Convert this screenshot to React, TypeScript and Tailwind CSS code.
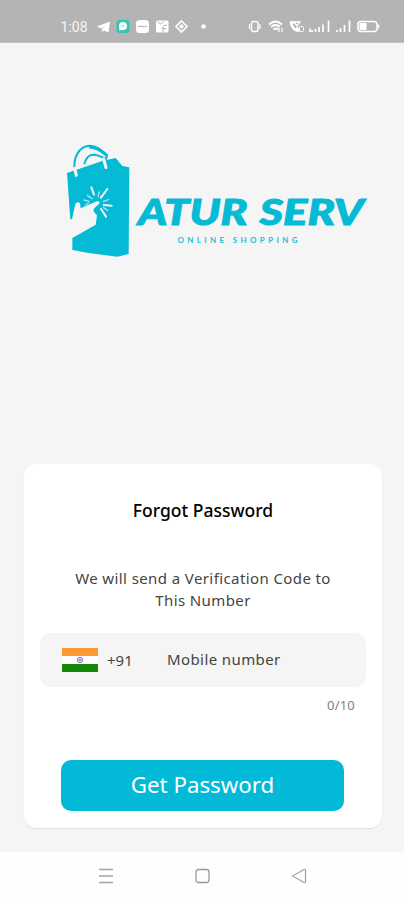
const StatusBar = () => (
    <div className="h-[43px] shrink-0 bg-[#b4b4b4] text-white border-b border-[#c4c4c4]">
        <svg className="w-[404px] h-[42px]" viewBox="0 0 404 42" fill="none">
            <text x="60.5" y="31.5" fontSize="14" fill="#f6f6f6" textLength="27" lengthAdjust="spacingAndGlyphs" fontFamily="Roboto, sans-serif">1:08</text>
            {/* notifications */}
            <path d="M97 26.500 110 21.500 108.500 32.500 104 30.500 102 32V28.500L107 24.500 101 28.500Z" fill="#fff" />
            <rect x="116.500" y="20" width="13" height="13" rx="3" fill="#35c4b5" />
            <circle cx="123" cy="26" r="4" fill="#fff" />
            <path d="m119 30.500 1-5 4 4Z" fill="#fff" />
            <circle cx="123" cy="26" r="1" fill="#8bdcd3" />
            <rect x="136" y="20" width="13" height="13" rx="3.500" fill="#fff" />
            <path d="M138 26.500h9" stroke="#bbb" strokeWidth="1.200" />
            <rect x="156" y="20.500" width="12.500" height="12" rx="1.500" fill="#fff" />
            <path d="m157.500 21.500 3 2.500 3.500-2.500M163 32.500v-5q0-2.500 4-2.500M161.500 28.500h4.500" stroke="#b4b4b4" strokeWidth="1" />
            <path d="m181.500 21 5.500 5.500-5.500 5.500-5.500-5.500Z" stroke="#fff" strokeWidth="1.600" />
            <path d="m181.500 24 2.500 2.500-2.500 2.500-2.500-2.500Z" fill="#fff" />
            <circle cx="203.500" cy="26.500" r="2.300" fill="#fff" />

            {/* vibrate, wifi, call */}
            <rect x="251.500" y="21.500" width="6.500" height="10" rx="2" stroke="#fff" strokeWidth="1.500" />
            <path d="M249.500 24v5M260 24v5" stroke="#fff" strokeWidth="1.200" />
            <path d="M269 24.500Q275.500 18.500 282 24.500M271 27Q275.500 23 280 27M273.500 29.500Q275.500 27.500 278 29.500" stroke="#fff" strokeWidth="2" />
            <path d="M279 32v-4M282 28v4" stroke="#fff" strokeWidth="1.200" />
            <path d="M290 22Q291.500 31.500 299 31.500L300 29 297 27.500 295.500 28.500Q293 26.500 292.500 24.500L293.500 23 292 21Z" fill="#fff" stroke="#fff" />
            <path d="M294 22h6l-3 4Z" stroke="#fff" strokeWidth="1.300" />
            <rect x="299.500" y="26.500" width="4" height="5" rx="1" stroke="#fff" />
            {/* signal bars */}
            <path d="M310 32v-3.500M312 32v-2M315.500 32v-3M319 32v-5M323 32v-7.500M328.500 32V20.500M337 32v-2M340.500 32v-4M344.500 32v-7M349.500 32V20.500" stroke="#fff" strokeWidth="1.700" />
            <rect x="358" y="21.500" width="19" height="10" rx="3" stroke="#fff" strokeWidth="1.500" />
            <rect x="359.500" y="23" width="7" height="7" rx="1" fill="#fff" />
            <path d="M378.500 24.500v4" stroke="#fff" strokeWidth="1.500" />
        </svg>
    </div>
)

const Logo = () => (
    <svg className="w-[310px] h-[120px] ml-[62px]" viewBox="62 141 310 120">
        {/* shopping bag */}
        <g transform="translate(55 135) scale(.33333)">
            <path d="M36 114 144 77 182 69 202 93 223 97 221 357 187 365 100 354 52 345 52 309Q87 289 122 269L126 241 118 232Q113 225 119 218L132 207Q136 197 126 199L94 212 77 220 75 205Q67 197 61 207L51 253H46Z" fill="#05bad5" />
            <path d="M60 112C51 65 75 34 103 32Q129 31 156 62L153 72 138 65Q98 46 88 88" fill="none" stroke="#05bad5" strokeWidth="6" />
            <path d="M102 36Q127 36 156 62" fill="none" stroke="#05bad5" strokeWidth="9" />
            <path d="M59 100 64 121M146 72 153 98" stroke="#f5f5f5" strokeWidth="9" strokeLinecap="round" />
            <path d="M109 157 117 179M157 162 138 188M146 210 170 212M138 222 153 245" stroke="#f5f5f5" strokeWidth="6" strokeLinecap="round" />
            <path d="M132 171 130 186M145 200 160 194M97 181 111 191M87 195 102 199M91 210 101 204M145 218 158 226" stroke="#a5e3ee" strokeWidth="4" strokeLinecap="round" />
        </g>
        <g fontSize="36" fontWeight="900" fontStyle="italic" fill="#05bad5" stroke="#05bad5" strokeWidth="1" fontFamily="Lato, sans-serif">
            <text x="138" y="225" textLength="109.500" lengthAdjust="spacingAndGlyphs">ATUR</text>
            <text x="259.500" y="225" textLength="104" lengthAdjust="spacingAndGlyphs">SERV</text>
        </g>
        <text x="177.500" y="242.700" fontSize="8" fontWeight="700" fill="#20bfd7" textLength="120" fontFamily="Lato, sans-serif">ONLINE SHOPPING</text>
    </svg>
)

const Flag = () => (
    <div className="flex flex-col w-9 h-6">
        <div className="h-2 bg-[#ff9933]"></div>
        <div className="flex items-center justify-center h-2 bg-white">
            <svg className="w-2 h-2" viewBox="0 0 8 8" fill="none" stroke="#7777c8">
                <circle cx="4" cy="4" r="2.800" strokeWidth=".8" />
                <path d="M1 4h6M4 1v6M2 2l4 4M6 2 2 6" strokeWidth=".6" />
            </svg>
        </div>
        <div className="h-2 bg-[#138808]"></div>
    </div>
)

const NavBar = () => (
    <div className="flex justify-center gap-[81px] pt-4 h-12 shrink-0 bg-[#fefefe]">
        <svg className="w-4 h-4" viewBox="0 0 16 16" fill="none" stroke="#a5a5a5" strokeWidth="1.300">
            <path d="M2 1.500h14M2 8h14M2 14.500h14" />
        </svg>
        <svg className="w-4 h-4" viewBox="0 0 16 16" fill="none" stroke="#999" strokeWidth="1.300">
            <rect x="2" y="1.500" width="13" height="13" rx="2.500" />
        </svg>
        <svg className="w-4 h-4" viewBox="0 0 16 16" fill="none" stroke="#a5a5a5" strokeWidth="1.300" strokeLinejoin="round">
            <path d="M1.500 8 13 1.500q1.500-.5 1.500 1v11q0 1.500-1.500 1Z" />
        </svg>
    </div>
)

export default function App() {
    return (
        <div className="flex flex-col w-[404px] h-[900px] overflow-hidden bg-[#f5f5f5] font-['Noto_Sans',sans-serif]">
            <StatusBar />
            <div className="pt-[98px] h-[421px] shrink-0">
                <Logo />
            </div>

            <div className="flex flex-col h-[364px] ml-6 w-[358px] shrink-0 rounded-xl bg-white shadow-[0_1px_1px_#dedede]">
                <h1 className="mt-[34px] text-center text-[17.5px] leading-6 font-medium text-black whitespace-nowrap">Forgot Password</h1>
                <p className="mt-[45px] text-center text-[15px] leading-[22px] tracking-[0.4px] text-[#444]">
                    We will send a Verification Code to<br />This Number
                </p>

                <div className="flex items-center mt-[22px] ml-4 w-[326px] h-[54px] shrink-0 rounded-[10px] bg-[#f5f5f5] pl-[22px] text-[15px] text-[#444]">
                    <Flag />
                    <span className="ml-[9px] w-[60px]">+91</span>
                    <span className="pb-0.5 tracking-[0.4px]">Mobile number</span>
                </div>
                <span className="mt-[8px] mr-[27px] text-right text-[13px] leading-5 tracking-[0.2px] text-[#808080]">0/10</span>

                <button className="mt-[45px] ml-[37px] w-[283px] h-[51px] shrink-0 rounded-[10px] bg-[#02bad7] pb-0.5 text-[22.3px] text-white">Get Password</button>
            </div>

            <div className="grow"></div>
            <NavBar />
        </div>
    )
}
